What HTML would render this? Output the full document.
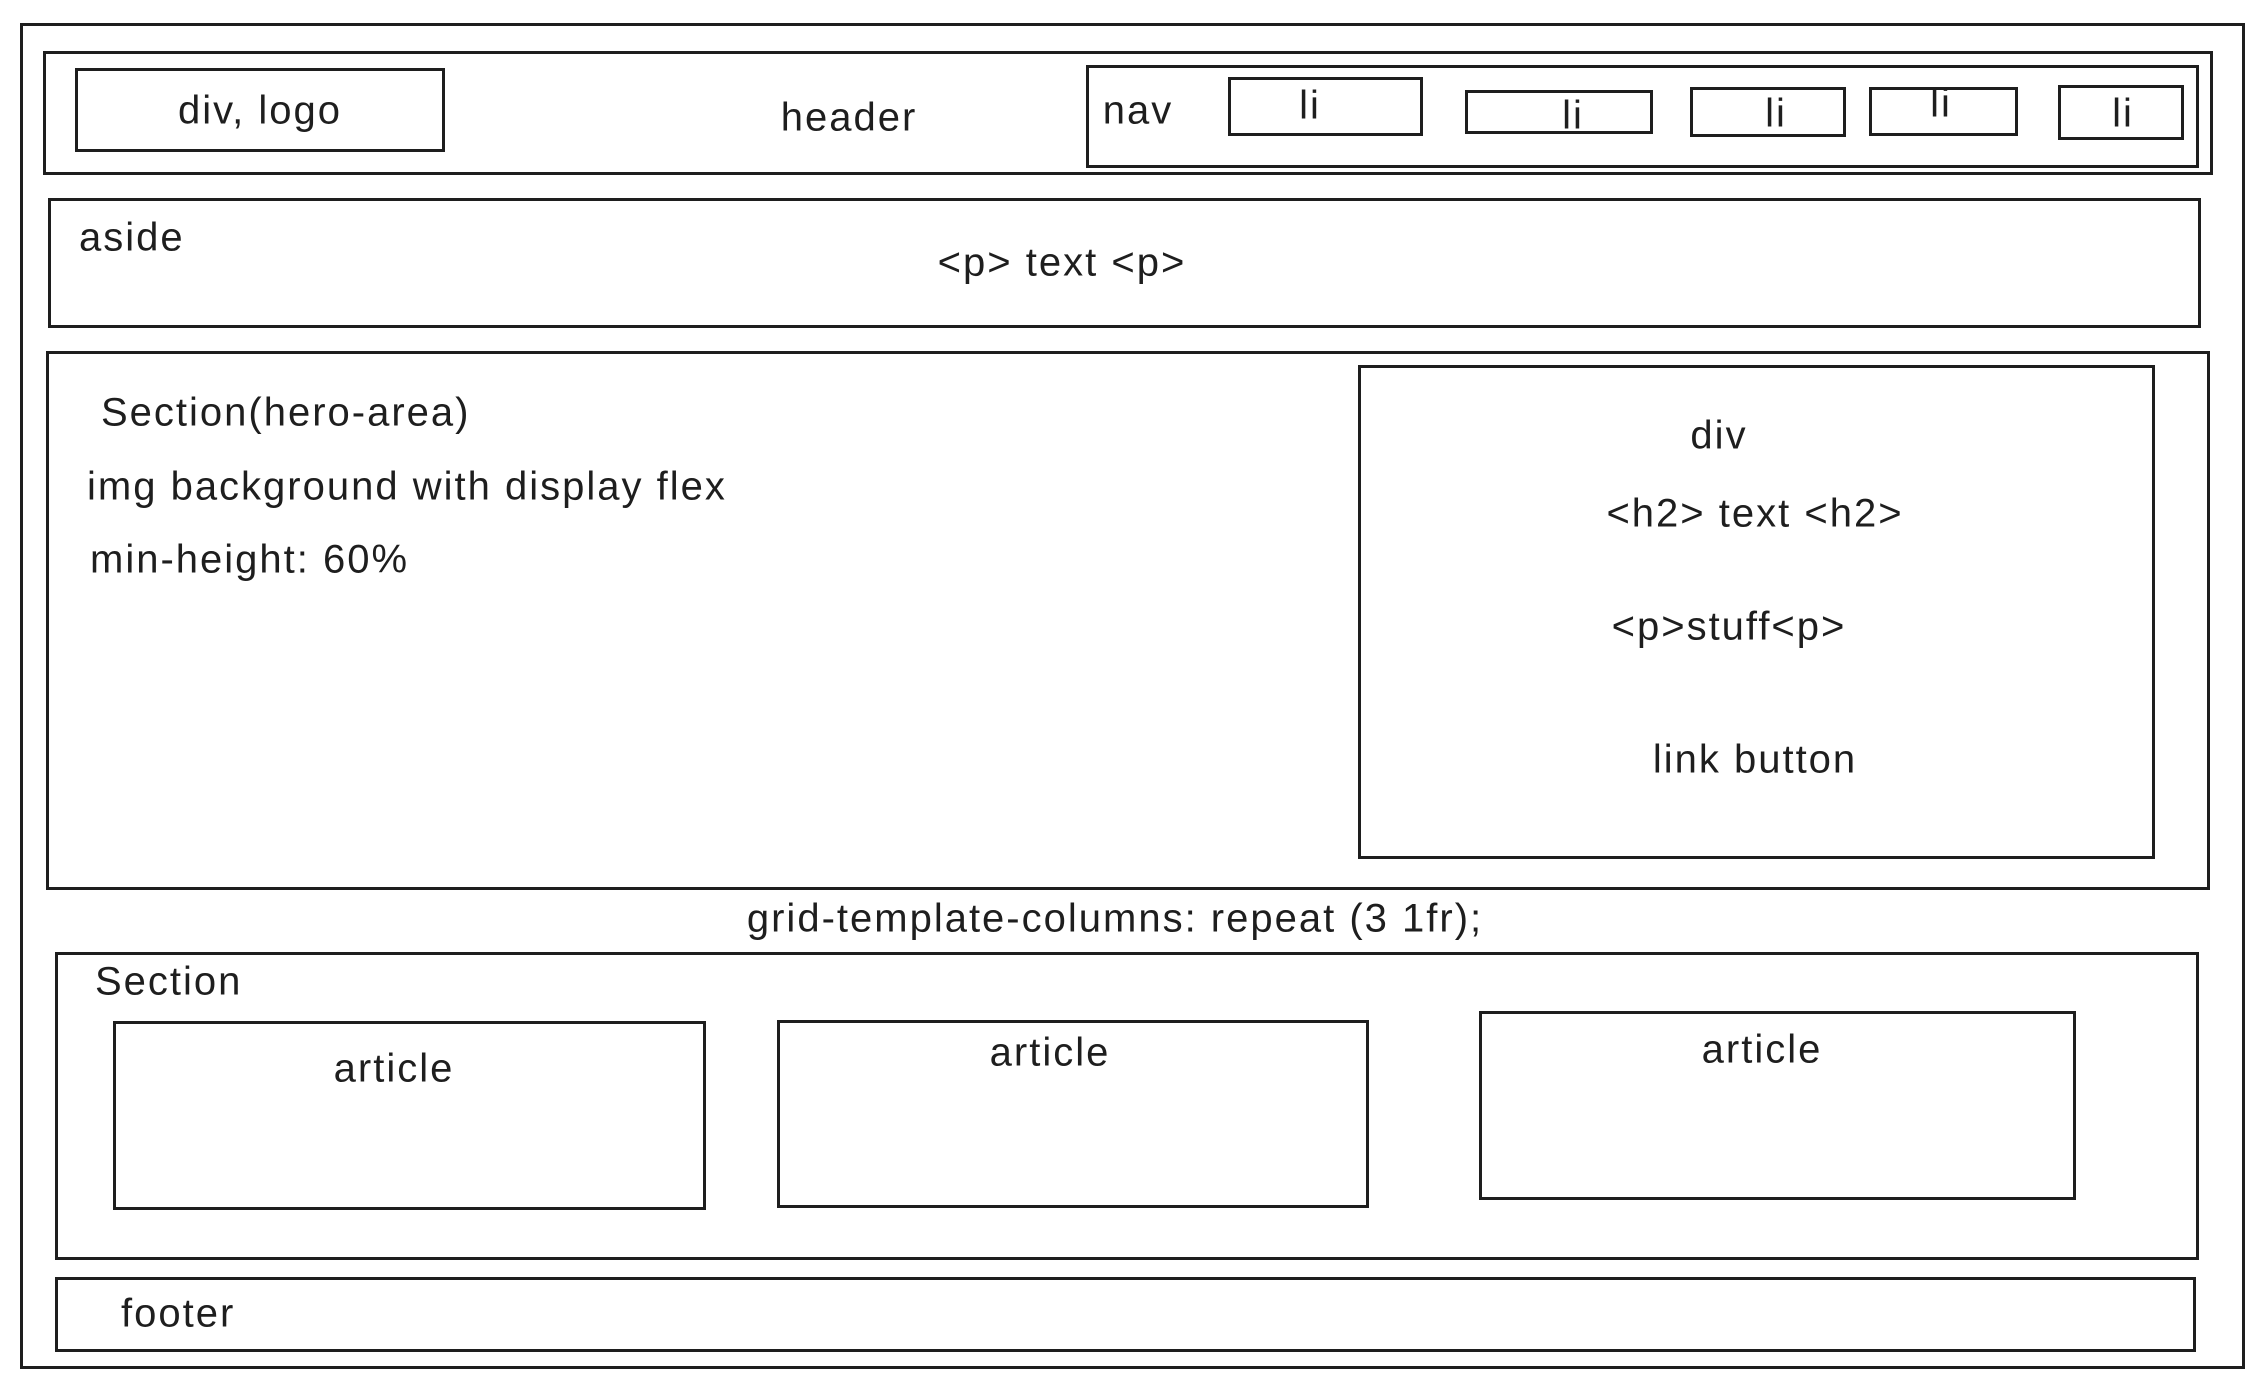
<!DOCTYPE html>
<html><head><meta charset="utf-8"><style>
html,body{margin:0;padding:0;background:#fff;width:2265px;height:1389px;overflow:hidden}
.b{position:absolute;border:3px solid #1e1e1e;box-sizing:border-box}
.t{position:absolute;font-family:"Liberation Sans",sans-serif;font-size:40px;letter-spacing:2px;color:#1e1e1e;white-space:nowrap;transform:translate(-50%,-50%)}
.l{position:absolute;font-family:"Liberation Sans",sans-serif;font-size:40px;letter-spacing:2px;color:#1e1e1e;white-space:nowrap;transform:translateY(-50%)}
</style></head><body>
<div class="b" style="left:20px;top:23px;width:2225px;height:1346px"></div>
<div class="b" style="left:43px;top:51px;width:2170px;height:124px"></div>
<div class="b" style="left:75px;top:68px;width:370px;height:84px"></div>
<div class="t" style="left:260px;top:111px">div, logo</div>
<div class="t" style="left:849px;top:118px">header</div>
<div class="b" style="left:1086px;top:65px;width:1113px;height:103px"></div>
<div class="t" style="left:1138px;top:111px">nav</div>
<div class="b" style="left:1228px;top:77px;width:195px;height:59px"></div>
<div class="t" style="left:1310px;top:106px">li</div>
<div class="b" style="left:1465px;top:90px;width:188px;height:44px"></div>
<div class="t" style="left:1573px;top:116px">li</div>
<div class="b" style="left:1690px;top:87px;width:156px;height:50px"></div>
<div class="t" style="left:1776px;top:114px">li</div>
<div class="b" style="left:1869px;top:87px;width:149px;height:49px"></div>
<div class="t" style="left:1941px;top:104px">li</div>
<div class="b" style="left:2058px;top:85px;width:126px;height:55px"></div>
<div class="t" style="left:2123px;top:114px">li</div>
<div class="b" style="left:48px;top:198px;width:2153px;height:130px"></div>
<div class="l" style="left:79px;top:238px">aside</div>
<div class="t" style="left:1062px;top:263px">&lt;p&gt; text &lt;p&gt;</div>
<div class="b" style="left:46px;top:351px;width:2164px;height:539px"></div>
<div class="l" style="left:101px;top:413px">Section(hero-area)</div>
<div class="l" style="left:87px;top:487px">img background with display flex</div>
<div class="l" style="left:90px;top:560px">min-height: 60%</div>
<div class="b" style="left:1358px;top:365px;width:797px;height:494px"></div>
<div class="t" style="left:1719px;top:436px">div</div>
<div class="t" style="left:1755px;top:514px">&lt;h2&gt; text &lt;h2&gt;</div>
<div class="t" style="left:1729px;top:627px">&lt;p&gt;stuff&lt;p&gt;</div>
<div class="t" style="left:1755px;top:760px">link button</div>
<div class="t" style="left:1115px;top:919px">grid-template-columns: repeat (3 1fr);</div>
<div class="b" style="left:55px;top:952px;width:2144px;height:308px"></div>
<div class="l" style="left:95px;top:982px">Section</div>
<div class="b" style="left:113px;top:1021px;width:593px;height:189px"></div>
<div class="t" style="left:394px;top:1069px">article</div>
<div class="b" style="left:777px;top:1020px;width:592px;height:188px"></div>
<div class="t" style="left:1050px;top:1053px">article</div>
<div class="b" style="left:1479px;top:1011px;width:597px;height:189px"></div>
<div class="t" style="left:1762px;top:1050px">article</div>
<div class="b" style="left:55px;top:1277px;width:2141px;height:75px"></div>
<div class="l" style="left:121px;top:1314px">footer</div>
</body></html>
